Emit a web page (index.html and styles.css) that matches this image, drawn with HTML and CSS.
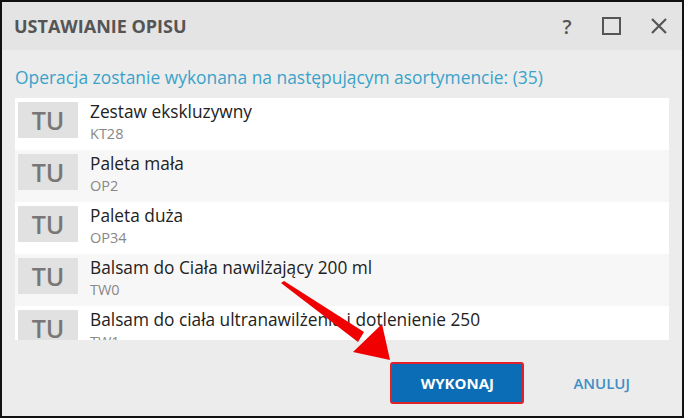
FILE: index.html
```html
<!DOCTYPE html>
<html lang="pl">
<head>
    <meta charset="UTF-8">
    <title>Ustawianie opisu</title>
    <link rel="stylesheet" href="styles.css">
</head>
<body>
    <div class="dialog">
        <div class="titlebar">
            <h1>USTAWIANIE OPISU</h1>
            <div class="win-buttons">
                <span class="help">?</span>
                <span class="maximize"></span>
                <svg class="close" width="18" height="18" viewBox="0 0 18 18">
                    <path d="M2 2 L16 16 M16 2 L2 16" stroke="#555" stroke-width="2.2" fill="none"/>
                </svg>
            </div>
        </div>

        <div class="content">
            <p class="info">Operacja zostanie wykonana na następującym asortymencie: (35)</p>

            <div class="list">
                <div class="row">
                    <div class="badge">TU</div>
                    <div class="texts">
                        <div class="name">Zestaw ekskluzywny</div>
                        <div class="code">KT28</div>
                    </div>
                </div>
                <div class="row">
                    <div class="badge">TU</div>
                    <div class="texts">
                        <div class="name">Paleta mała</div>
                        <div class="code">OP2</div>
                    </div>
                </div>
                <div class="row">
                    <div class="badge">TU</div>
                    <div class="texts">
                        <div class="name">Paleta duża</div>
                        <div class="code">OP34</div>
                    </div>
                </div>
                <div class="row">
                    <div class="badge">TU</div>
                    <div class="texts">
                        <div class="name">Balsam do Ciała nawilżający 200 ml</div>
                        <div class="code">TW0</div>
                    </div>
                </div>
                <div class="row">
                    <div class="badge">TU</div>
                    <div class="texts">
                        <div class="name">Balsam do ciała ultranawilżenia i dotlenienie 250</div>
                        <div class="code">TW1</div>
                    </div>
                </div>
            </div>
        </div>

        <div class="footer">
            <button class="btn-primary">WYKONAJ</button>
            <button class="btn-link">ANULUJ</button>
        </div>

        <!-- strzałka wskazująca przycisk -->
        <svg class="arrow" width="684" height="418" viewBox="0 0 684 418">
            <polygon points="281,283 284,281 364,332 358,342" fill="#f00000"/>
            <polygon points="353,352 382,324 390,360" fill="#f00000"/>
        </svg>
    </div>
</body>
</html>
```

FILE: styles.css
```css
* {
    box-sizing: border-box;
}

html, body {
    margin: 0;
    padding: 0;
}

body {
    font-family: 'Open Sans', 'Noto Sans', sans-serif;
    width: 684px;
    height: 418px;
    overflow: hidden;
}

.dialog {
    position: relative;
    width: 684px;
    height: 418px;
    border: 2px solid #111;
    background-color: #ececec;
    display: flex;
    flex-direction: column;
}

.titlebar {
    height: 48px;
    background-color: #e4e4e4;
    display: flex;
    align-items: center;
    justify-content: space-between;
    padding: 0 14px 0 12px;
}

.titlebar h1 {
    margin: 0;
    font-size: 18px;
    font-weight: 700;
    color: #555;
}

.win-buttons {
    display: flex;
    align-items: center;
}

.help {
    font-size: 20px;
    font-weight: 600;
    color: #555;
    width: 30px;
    text-align: center;
    margin-right: 20px;
}

.maximize {
    width: 19px;
    height: 18px;
    border: 2px solid #555;
    margin-right: 29px;
}

.content {
    padding: 0 13px;
}

.info {
    margin: 16px 0 9px 0;
    font-size: 17.4px;
    color: #3aa2c9;
    height: 23px;
    line-height: 23px;
}

.list {
    height: 242px;
    overflow: hidden;
    background-color: #fff;
}

.row {
    height: 52px;
    display: flex;
    align-items: flex-start;
    padding: 4px 0 0 3px;
    background-color: #fff;
}

.row:nth-child(even) {
    background-color: #f7f7f7;
}

.badge {
    width: 60px;
    height: 36px;
    background-color: #e1e1e1;
    color: #777;
    font-size: 25px;
    font-weight: 600;
    display: flex;
    align-items: center;
    justify-content: center;
}

.texts {
    margin-left: 12px;
    margin-top: -3px;
}

.name {
    font-size: 17.3px;
    color: #222;
    line-height: 25px;
}

.code {
    font-size: 14.5px;
    color: #888;
    line-height: 20px;
}

.footer {
    flex: 1;
    display: flex;
    align-items: center;
    justify-content: flex-end;
    padding: 10px 52px 0 0;
    gap: 49px;
}

.btn-primary {
    width: 134px;
    height: 42px;
    background-color: #0b6db5;
    border: 2px solid #e0202a;
    border-radius: 3px;
    color: #fff;
    font-family: 'Open Sans', sans-serif;
    font-size: 15px;
    font-weight: 700;
    cursor: pointer;
}

.btn-link {
    background: none;
    border: none;
    padding: 0;
    color: #3f8fc4;
    font-family: 'Open Sans', sans-serif;
    font-size: 15px;
    font-weight: 600;
    cursor: pointer;
}

.arrow {
    position: absolute;
    left: -2px;
    top: -2px;
    pointer-events: none;
}
```
